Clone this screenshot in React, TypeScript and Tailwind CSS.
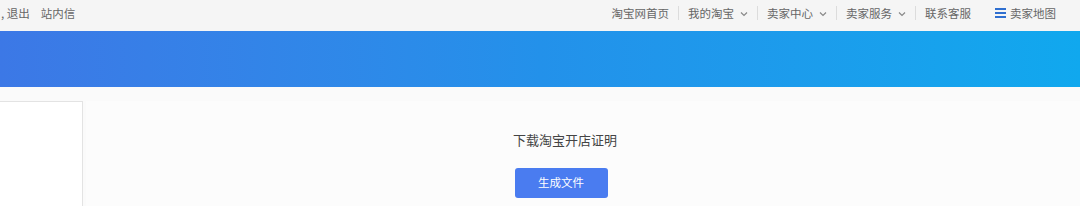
import React from 'react';

const font = { fontFamily: '"Noto Sans CJK SC", "Liberation Sans", sans-serif' };

const Chevron = () => (
  <svg width="8" height="6" viewBox="0 0 8 6" className="ml-[6px] mt-[1px]">
    <path d="M1 1.5 L4 4.5 L7 1.5" fill="none" stroke="#888" strokeWidth="1.2" />
  </svg>
);

const Sep = () => <span className="mx-[9px] h-[14px] w-px bg-[#dcdcdc]" />;

const App: React.FC = () => {
  return (
    <div className="h-[206px] w-[1080px] overflow-hidden bg-[#fafafa]" style={font}>
      {/* Top bar */}
      <div className="flex h-[31px] items-start justify-between bg-[#f5f5f5] pt-[5px] text-[11.5px] leading-[16px] text-[#666]">
        <div className="flex items-center">
          <span className="ml-[1px]">, 退出</span>
          <span className="ml-[11px]">站内信</span>
        </div>
        <div className="mr-[24px] flex items-center">
          <span>淘宝网首页</span>
          <Sep />
          <span className="flex items-center">我的淘宝<Chevron /></span>
          <Sep />
          <span className="flex items-center">卖家中心<Chevron /></span>
          <Sep />
          <span className="flex items-center">卖家服务<Chevron /></span>
          <Sep />
          <span>联系客服</span>
          <span className="ml-[24px] flex items-center">
            <svg width="11" height="10" viewBox="0 0 11 10" className="mr-[4px]">
              <rect x="0" y="0" width="11" height="2" fill="#2f6fd0" />
              <rect x="0" y="4" width="11" height="2" fill="#2f6fd0" />
              <rect x="0" y="8" width="11" height="2" fill="#2f6fd0" />
            </svg>
            卖家地图
          </span>
        </div>
      </div>

      {/* Banner */}
      <div className="h-[56px] bg-gradient-to-r from-[#3c78e6] via-[#2391ea] to-[#10a8ee]" />

      {/* Content */}
      <div className="mt-[14px] flex h-[105px]">
        <div className="w-[83px] border-r border-t border-[#e3e3e3] bg-white" />
        <div className="ml-[3px] flex flex-1 flex-col items-center bg-[#fcfcfc] pr-[44px] pt-[30px]">
          <p className="ml-[8px] text-[13px] leading-[18px] text-[#444]">下载淘宝开店证明</p>
          <button className="mt-[19px] h-[30px] w-[93px] rounded-[3px] bg-[#4a7cf0] text-[11.5px] text-white">
            生成文件
          </button>
        </div>
      </div>
    </div>
  );
};

export default App;
